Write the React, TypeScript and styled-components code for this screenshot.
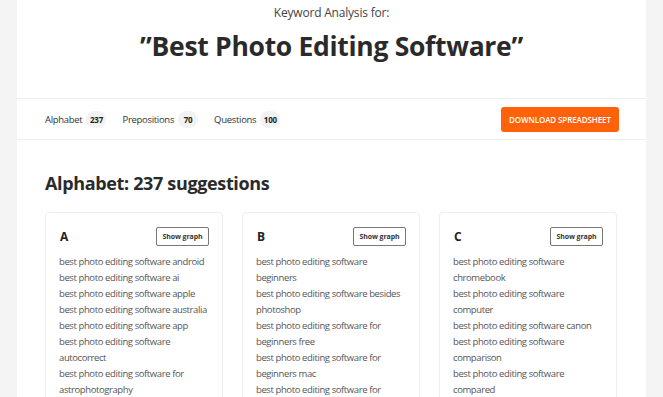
import React from "react";
import styled, { createGlobalStyle } from "styled-components";

const Global = createGlobalStyle`
  html, body { margin: 0; padding: 0; }
  body {
    background: #f4f4f4;
    font-family: "Open Sans", "Noto Sans", sans-serif;
    color: #333;
    overflow: hidden;
  }
`;

const Page = styled.div`
  width: 629px;
  margin-left: 17px;
  background: #fff;
  min-height: 397px;
`;

const Header = styled.header`
  display: flex;
  flex-direction: column;
  align-items: center;
  padding-top: 4px;
  height: 99px;
  box-sizing: border-box;
  border-bottom: 1px solid #efefef;
`;

const Sub = styled.div`
  font-size: 12px;
  color: #444;
  line-height: 18px;
  letter-spacing: -0.2px;
`;

const Title = styled.h1`
  margin: 6px 0 0;
  font-size: 26.5px;
  font-weight: 700;
  color: #2a2a2a;
  line-height: 36px;
  letter-spacing: -0.3px;
`;

const TabBar = styled.nav`
  display: flex;
  align-items: center;
  height: 40px;
  padding: 0 27px 0 28px;
  border-bottom: 1px solid #efefef;
`;

const Tab = styled.div`
  display: flex;
  align-items: center;
  gap: 4px;
  font-size: 9.5px;
  font-weight: 500;
  color: #333;
  margin-right: 16px;
  letter-spacing: -0.3px;
`;

const Badge = styled.span`
  display: inline-flex;
  align-items: center;
  justify-content: center;
  min-width: 20px;
  height: 17px;
  padding: 0 3px;
  box-sizing: border-box;
  border-radius: 9px;
  background: #f2f2f2;
  font-size: 8px;
  font-weight: 700;
  color: #222;
  letter-spacing: -0.2px;
`;

const Spacer = styled.div`
  flex: 1;
`;

const DownloadButton = styled.button`
  border: none;
  background: #ff6208;
  color: #fff;
  font-family: inherit;
  font-size: 8px;
  font-weight: 600;
  text-transform: uppercase;
  letter-spacing: -0.1px;
  width: 118px;
  height: 25px;
  border-radius: 3px;
  padding: 0;
`;

const Section = styled.section`
  padding: 31px 28px 0;
`;

const SectionTitle = styled.h2`
  margin: 0 0 17px;
  font-size: 18px;
  font-weight: 700;
  color: #2a2a2a;
  line-height: 24px;
  letter-spacing: -0.35px;
`;

const Grid = styled.div`
  display: grid;
  grid-template-columns: repeat(3, 178px);
  column-gap: 19px;
`;

const Card = styled.div`
  border: 1px solid #eeeeee;
  border-radius: 4px;
  padding: 13px 12px 0 13px;
  height: 200px;
  box-sizing: border-box;
`;

const CardHead = styled.div`
  display: flex;
  align-items: center;
  justify-content: space-between;
  height: 20px;
  margin-bottom: 8px;
`;

const Letter = styled.span`
  font-size: 12px;
  font-weight: 700;
  color: #222;
  padding-left: 1px;
`;

const GraphButton = styled.button`
  background: #fff;
  border: 1px solid #777;
  border-radius: 2px;
  font-family: inherit;
  font-size: 7px;
  font-weight: 700;
  color: #333;
  width: 53px;
  height: 19px;
  padding: 0;
  margin-right: 1px;
  letter-spacing: -0.1px;
`;

const List = styled.ul`
  list-style: none;
  margin: 0;
  padding: 0;
`;

const Item = styled.li`
  font-size: 9.5px;
  line-height: 16px;
  color: #555;
  letter-spacing: -0.4px;
`;

const cards = [
  {
    letter: "A",
    items: [
      "best photo editing software android",
      "best photo editing software ai",
      "best photo editing software apple",
      "best photo editing software australia",
      "best photo editing software app",
      "best photo editing software autocorrect",
      "best photo editing software for astrophotography",
    ],
  },
  {
    letter: "B",
    items: [
      "best photo editing software beginners",
      "best photo editing software besides photoshop",
      "best photo editing software for beginners free",
      "best photo editing software for beginners mac",
      "best photo editing software for beginners windows",
    ],
  },
  {
    letter: "C",
    items: [
      "best photo editing software chromebook",
      "best photo editing software computer",
      "best photo editing software canon",
      "best photo editing software comparison",
      "best photo editing software compared",
    ],
  },
];

export default function App() {
  return (
    <>
      <Global />
      <Page>
        <Header>
          <Sub>Keyword Analysis for:</Sub>
          <Title>”Best Photo Editing Software”</Title>
        </Header>
        <TabBar>
          <Tab>
            Alphabet <Badge>237</Badge>
          </Tab>
          <Tab>
            Prepositions <Badge>70</Badge>
          </Tab>
          <Tab>
            Questions <Badge>100</Badge>
          </Tab>
          <Spacer />
          <DownloadButton>Download Spreadsheet</DownloadButton>
        </TabBar>
        <Section>
          <SectionTitle>Alphabet: 237 suggestions</SectionTitle>
          <Grid>
            {cards.map((c) => (
              <Card key={c.letter}>
                <CardHead>
                  <Letter>{c.letter}</Letter>
                  <GraphButton>Show graph</GraphButton>
                </CardHead>
                <List>
                  {c.items.map((t) => (
                    <Item key={t}>{t}</Item>
                  ))}
                </List>
              </Card>
            ))}
          </Grid>
        </Section>
      </Page>
    </>
  );
}
